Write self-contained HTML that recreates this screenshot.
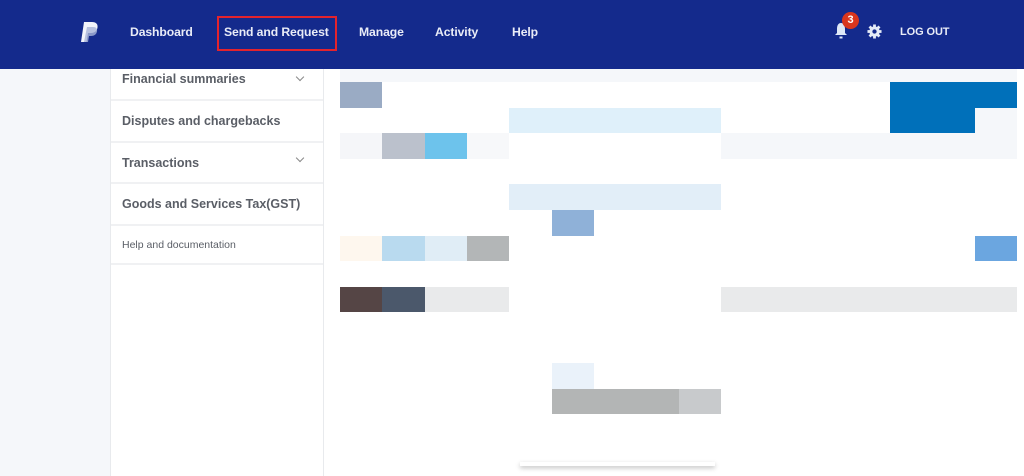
<!DOCTYPE html>
<html><head><style>
*{margin:0;padding:0;box-sizing:border-box}
body{width:1024px;height:476px;overflow:hidden;background:#f5f7fa;font-family:"Liberation Sans",sans-serif;position:relative}
.hdr{position:absolute;left:0;top:0;width:1024px;height:69px;background:#142a8c}
.nav{position:absolute;top:25px;color:#e9ecf7;font-size:12.2px;font-weight:bold;letter-spacing:-0.1px}
.box{position:absolute;left:217px;top:16px;width:120px;height:35px;border:2px solid #e3232d}
.side{position:absolute;left:110px;top:69px;width:214px;height:407px;background:#fff;border-left:1px solid #e8eaed;border-right:1px solid #e8eaed}
.it{height:41.5px;border-bottom:2px solid #f0f1f3;position:relative;color:#5a5e66;font-weight:bold;font-size:12.5px;padding-left:11px}
.it span{position:absolute;top:13px}
.chev{position:absolute;right:20px;top:12px;width:6px;height:6px;border-right:1.3px solid #888;border-bottom:1.3px solid #888;transform:rotate(45deg)}
.main{position:absolute;left:324px;top:69px;width:700px;height:407px;background:#fff}
.b{position:absolute}
</style></head><body>
<div class="hdr">
<svg style="position:absolute;left:80px;top:21px" width="20" height="24" viewBox="0 0 20 24"><path d="M4 1h8c4 0 6 2 5.5 5.5C17 10 14.5 12 11 12H8l-1.5 9H1z" fill="#f2f4fb"/><path d="M7 6h6c3 0 4.5 1.5 4 4.5-.6 3-3 4.5-6 4.5H9l-1 6H4z" fill="#a8b4d8" opacity=".8"/></svg>
<div class="nav" style="left:130px">Dashboard</div>
<div class="nav" style="left:224px">Send and Request</div>
<div class="box"></div>
<div class="nav" style="left:359px">Manage</div>
<div class="nav" style="left:435px">Activity</div>
<div class="nav" style="left:512px">Help</div>
<svg style="position:absolute;left:834px;top:22px" width="14" height="18" viewBox="0 0 14 18"><path d="M7 1C4 1 3 4 3 7v4l-2 2h12l-2-2V7c0-3-1-6-4-6z" fill="#dfe8f7"/><rect x="5.5" y="14.5" width="3" height="2" fill="#dfe8f7"/></svg>
<div style="position:absolute;left:842px;top:12px;width:17px;height:17px;border-radius:50%;background:#d9361e;color:#fff;font-size:11px;font-weight:bold;text-align:center;line-height:17px">3</div>
<svg style="position:absolute;left:867px;top:24px" width="15" height="15" viewBox="0 0 16 16"><g fill="#e4ebf7"><circle cx="8" cy="8" r="5.5"/><rect x="6.5" y="0.5" width="3" height="15"/><rect x="0.5" y="6.5" width="15" height="3"/><rect x="6.5" y="0.5" width="3" height="15" transform="rotate(45 8 8)"/><rect x="6.5" y="0.5" width="3" height="15" transform="rotate(-45 8 8)"/></g><circle cx="8" cy="8" r="2.3" fill="#142a8c"/></svg>
<div class="nav" style="left:900px;top:26px;font-size:11px">LOG OUT</div>
</div>
<div class="side">
<div class="it" style="height:32px"><span style="top:3px">Financial summaries</span><i class="chev" style="top:5px"></i></div>
<div class="it"><span>Disputes and chargebacks</span></div>
<div class="it"><span>Transactions</span><i class="chev"></i></div>
<div class="it"><span>Goods and Services Tax(GST)</span></div>
<div class="it" style="font-weight:normal;font-size:10.5px;height:39px"><span>Help and documentation</span></div>
</div>
<div class="main">
<div class="b" style="left:16px;top:0;width:677px;height:13px;background:#f5f7fa"></div>
<div class="b" style="left:16px;top:13px;width:42px;height:26px;background:#9aabc4"></div>
<div class="b" style="left:566px;top:13px;width:127px;height:26px;background:#0070ba"></div>
<div class="b" style="left:566px;top:39px;width:85px;height:25px;background:#0070ba"></div>
<div class="b" style="left:651px;top:39px;width:42px;height:25px;background:#f5f7fa"></div>
<div class="b" style="left:185px;top:39px;width:212px;height:25px;background:#dff0fa"></div>
<div class="b" style="left:16px;top:64px;width:42px;height:26px;background:#f5f6f9"></div>
<div class="b" style="left:58px;top:64px;width:43px;height:26px;background:#bbc1cc"></div>
<div class="b" style="left:101px;top:64px;width:42px;height:26px;background:#6dc3ec"></div>
<div class="b" style="left:143px;top:64px;width:42px;height:26px;background:#f7f8fa"></div>
<div class="b" style="left:397px;top:64px;width:296px;height:26px;background:#f5f7fa"></div>
<div class="b" style="left:185px;top:115px;width:212px;height:26px;background:#e2eef8"></div>
<div class="b" style="left:228px;top:141px;width:42px;height:26px;background:#8fb1d8"></div>
<div class="b" style="left:16px;top:167px;width:42px;height:25px;background:#fef7ee"></div>
<div class="b" style="left:58px;top:167px;width:43px;height:25px;background:#b9daef"></div>
<div class="b" style="left:101px;top:167px;width:42px;height:25px;background:#e0edf6"></div>
<div class="b" style="left:143px;top:167px;width:42px;height:25px;background:#b3b6b7"></div>
<div class="b" style="left:651px;top:167px;width:42px;height:25px;background:#6ba6e0"></div>
<div class="b" style="left:16px;top:218px;width:42px;height:25px;background:#554545"></div>
<div class="b" style="left:58px;top:218px;width:43px;height:25px;background:#4b586b"></div>
<div class="b" style="left:101px;top:218px;width:84px;height:25px;background:#e9eaeb"></div>
<div class="b" style="left:397px;top:218px;width:296px;height:25px;background:#e9eaeb"></div>
<div class="b" style="left:228px;top:294px;width:42px;height:26px;background:#eaf2fa"></div>
<div class="b" style="left:228px;top:320px;width:127px;height:25px;background:#b3b5b5"></div>
<div class="b" style="left:355px;top:320px;width:42px;height:25px;background:#c8cacc"></div>
<div class="b" style="left:196px;top:393px;width:195px;height:4px;box-shadow:0 2px 5px rgba(0,0,0,.25)"></div>
</div>
</body></html>
